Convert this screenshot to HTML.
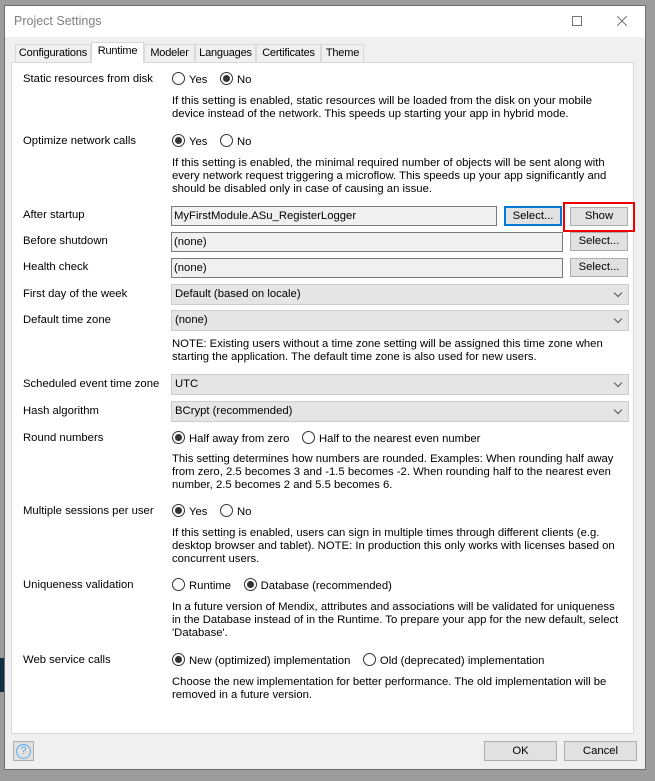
<!DOCTYPE html>
<html><head><meta charset="utf-8"><style>
*{box-sizing:border-box;margin:0;padding:0}
body{width:655px;height:781px;background:#9c9c9c;position:relative;overflow:hidden;font-family:"Liberation Sans",sans-serif;font-size:11.3px;color:#000}
.a{position:absolute;white-space:nowrap;line-height:14px}
.win{position:absolute;left:4px;top:5px;width:642px;height:765px;background:#f0f0f0;border:1px solid #6e6e6e}
.title{position:absolute;left:0;top:0;width:640px;height:31px;background:#fff}
.tab{position:absolute;top:44px;height:18px;border:1px solid #d9d9d9;border-bottom:none;background:#f0f0f0;text-align:center;line-height:17px;font-size:11px;letter-spacing:-0.2px}
.panel{position:absolute;left:11px;top:62px;width:623px;height:672px;background:#fff;border:1px solid #d9d9d9}
.desc{position:absolute;left:172px;line-height:13px;white-space:nowrap}
.r{display:inline-block;width:13px;height:13px;border:1px solid #333;border-radius:50%;vertical-align:-2px;margin-right:4px;position:relative;background:#fff}
.r.on::after{content:"";position:absolute;left:2px;top:2px;width:7px;height:7px;border-radius:50%;background:#333}
.inp{position:absolute;height:20px;border:1px solid #7a7a7a;background:#f0f0f0;padding-left:2px;line-height:18px}
.btn{position:absolute;height:19px;border:1px solid #adadad;background:#e1e1e1;text-align:center;line-height:17px}
.dd{position:absolute;left:171px;width:458px;height:21px;border:1px solid #ccc;background:#e5e5e5;padding-left:3px;line-height:19px}
.dd::after{content:"";position:absolute;right:7px;top:5px;width:5px;height:5px;border-right:1px solid #555;border-bottom:1px solid #555;transform:rotate(45deg)}
</style></head><body>
<div style="position:absolute;left:0;top:658px;width:5px;height:34px;background:#0f2e40"></div>
<div class="win">
<div class="title"></div>
<div class="a" style="left:9px;top:8px;font-size:12.5px;color:#808080">Project Settings</div>
<div style="position:absolute;left:567px;top:10px;width:10px;height:10px;border:1px solid #777"></div>
<svg style="position:absolute;left:612px;top:10px" width="10" height="10"><path d="M0 0L10 10M10 0L0 10" stroke="#777" stroke-width="1"/></svg>
</div>
<div class="tab" style="left:15px;width:76px">Configurations</div>
<div class="tab" style="left:91px;top:42px;height:21px;width:53px;background:#fff;z-index:2">Runtime</div>
<div class="tab" style="left:144px;width:51px">Modeler</div>
<div class="tab" style="left:195px;width:61px">Languages</div>
<div class="tab" style="left:256px;width:65px">Certificates</div>
<div class="tab" style="left:321px;width:43px">Theme</div>
<div class="panel"></div>

<div class="a" style="left:23px;top:72px">Static resources from disk</div>
<div class="a" style="left:172px;top:72px"><span class="r"></span>Yes&nbsp;&nbsp;&nbsp;&nbsp;<span class="r on"></span>No</div>
<div class="desc" style="top:95px">If this setting is enabled, static resources will be loaded from the disk on your mobile<br>device instead of the network. This speeds up starting your app in hybrid mode.</div>

<div class="a" style="left:23px;top:134px">Optimize network calls</div>
<div class="a" style="left:172px;top:134px"><span class="r on"></span>Yes&nbsp;&nbsp;&nbsp;&nbsp;<span class="r"></span>No</div>
<div class="desc" style="top:157px">If this setting is enabled, the minimal required number of objects will be sent along with<br>every network request triggering a microflow. This speeds up your app significantly and<br>should be disabled only in case of causing an issue.</div>

<div class="a" style="left:23px;top:208px">After startup</div>
<div class="inp" style="left:171px;top:206px;width:326px">MyFirstModule.ASu_RegisterLogger</div>
<div class="btn" style="left:504px;top:206px;width:58px;height:20px;border:2px solid #0078d7;line-height:16px">Select...</div>
<div style="position:absolute;left:563px;top:202px;width:72px;height:30px;border:2px solid #e00"></div>
<div class="btn" style="left:570px;top:207px;width:58px">Show</div>

<div class="a" style="left:23px;top:234px">Before shutdown</div>
<div class="inp" style="left:171px;top:232px;width:392px">(none)</div>
<div class="btn" style="left:570px;top:232px;width:58px">Select...</div>

<div class="a" style="left:23px;top:260px">Health check</div>
<div class="inp" style="left:171px;top:258px;width:392px">(none)</div>
<div class="btn" style="left:570px;top:258px;width:58px">Select...</div>

<div class="a" style="left:23px;top:287px">First day of the week</div>
<div class="dd" style="top:284px">Default (based on locale)</div>

<div class="a" style="left:23px;top:313px">Default time zone</div>
<div class="dd" style="top:310px">(none)</div>
<div class="desc" style="top:338px">NOTE: Existing users without a time zone setting will be assigned this time zone when<br>starting the application. The default time zone is also used for new users.</div>

<div class="a" style="left:23px;top:377px">Scheduled event time zone</div>
<div class="dd" style="top:374px">UTC</div>

<div class="a" style="left:23px;top:404px">Hash algorithm</div>
<div class="dd" style="top:401px">BCrypt (recommended)</div>

<div class="a" style="left:23px;top:431px">Round numbers</div>
<div class="a" style="left:172px;top:431px"><span class="r on"></span>Half away from zero&nbsp;&nbsp;&nbsp;&nbsp;<span class="r"></span>Half to the nearest even number</div>
<div class="desc" style="top:453px">This setting determines how numbers are rounded. Examples: When rounding half away<br>from zero, 2.5 becomes 3 and -1.5 becomes -2. When rounding half to the nearest even<br>number, 2.5 becomes 2 and 5.5 becomes 6.</div>

<div class="a" style="left:23px;top:504px">Multiple sessions per user</div>
<div class="a" style="left:172px;top:504px"><span class="r on"></span>Yes&nbsp;&nbsp;&nbsp;&nbsp;<span class="r"></span>No</div>
<div class="desc" style="top:527px">If this setting is enabled, users can sign in multiple times through different clients (e.g.<br>desktop browser and tablet). NOTE: In production this only works with licenses based on<br>concurrent users.</div>

<div class="a" style="left:23px;top:578px">Uniqueness validation</div>
<div class="a" style="left:172px;top:578px"><span class="r"></span>Runtime&nbsp;&nbsp;&nbsp;&nbsp;<span class="r on"></span>Database (recommended)</div>
<div class="desc" style="top:601px">In a future version of Mendix, attributes and associations will be validated for uniqueness<br>in the Database instead of in the Runtime. To prepare your app for the new default, select<br>'Database'.</div>

<div class="a" style="left:23px;top:653px">Web service calls</div>
<div class="a" style="left:172px;top:653px"><span class="r on"></span>New (optimized) implementation&nbsp;&nbsp;&nbsp;&nbsp;<span class="r"></span>Old (deprecated) implementation</div>
<div class="desc" style="top:676px">Choose the new implementation for better performance. The old implementation will be<br>removed in a future version.</div>

<div class="btn" style="left:13px;top:741px;width:21px;height:20px;background:#e1e1e1"></div>
<div style="position:absolute;left:16px;top:744px;width:15px;height:15px;border:1.5px solid #5aa9f0;border-radius:50%;color:#5aa9f0;font-size:11px;line-height:12px;text-align:center">?</div>
<div class="btn" style="left:484px;top:741px;width:73px;height:20px;line-height:18px">OK</div>
<div class="btn" style="left:564px;top:741px;width:73px;height:20px;line-height:18px">Cancel</div>
</body></html>
